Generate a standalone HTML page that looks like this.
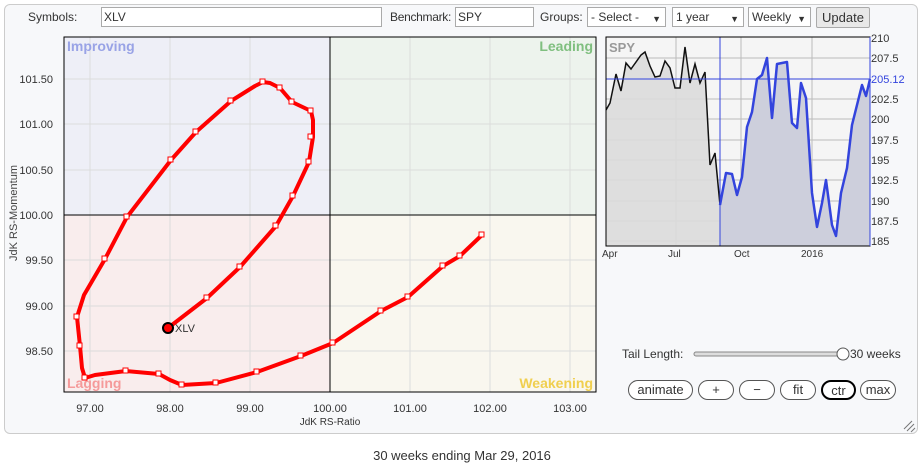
<!DOCTYPE html>
<html><head><meta charset="utf-8"><style>
*{margin:0;padding:0;box-sizing:border-box}
body{width:924px;height:466px;background:#fff;font-family:"Liberation Sans",Arial,sans-serif;position:relative;overflow:hidden;font-size:13px;color:#333}
.panel{position:absolute;left:4px;top:4px;width:914px;height:430px;background:#f7f8fa;border:1px solid #ccc;border-radius:6px}
.ab{position:absolute;font-size:12px}
.inp{position:absolute;height:20px;border:1px solid #aaa;background:#fff;font-size:12px;padding:2px 2px;line-height:15px}
.sel{position:absolute;height:20px;border:1px solid #aaa;background:#fff;font-size:12px;padding:2px 3px;line-height:15px}
.sel:after{content:"▼";position:absolute;right:4px;top:4px;font-size:9px}
.btn{position:absolute;height:20px;border:1px solid #555;border-radius:10px;background:#fff;font-size:13px;text-align:center;line-height:18px}
</style></head><body>
<div class="panel"></div>
<div class="ab" style="left:28px;top:10px">Symbols:</div>
<div class="inp" style="left:101px;top:7px;width:281px">XLV</div>
<div class="ab" style="left:390px;top:10px;letter-spacing:-0.3px">Benchmark:</div>
<div class="inp" style="left:455px;top:7px;width:79px">SPY</div>
<div class="ab" style="left:540px;top:10px">Groups:</div>
<div class="sel" style="left:587px;top:7px;width:79px">- Select -</div>
<div class="sel" style="left:672px;top:7px;width:72px">1 year</div>
<div class="sel" style="left:748px;top:7px;width:63px">Weekly</div>
<div class="ab" style="left:816px;top:7px;width:54px;height:21px;border:1px solid #aaa;border-radius:2px;background:#e8e8e8;text-align:center;line-height:19px;font-size:13px">Update</div>

<svg class="ab" style="left:0;top:0" width="924" height="466" font-family="Liberation Sans, Arial, sans-serif">
<rect x="64" y="37" width="266" height="178" fill="#eeeff7"/>
<rect x="330" y="37" width="266" height="178" fill="#edf3ed"/>
<rect x="64" y="215" width="266" height="177" fill="#f9eded"/>
<rect x="330" y="215" width="266" height="177" fill="#f9f7ef"/>
<g stroke="#dcdcdc" stroke-width="1">
<line x1="90" y1="37" x2="90" y2="392"/><line x1="170" y1="37" x2="170" y2="392"/><line x1="250" y1="37" x2="250" y2="392"/>
<line x1="410" y1="37" x2="410" y2="392"/><line x1="490" y1="37" x2="490" y2="392"/><line x1="570" y1="37" x2="570" y2="392"/>
<line x1="64" y1="79" x2="596" y2="79"/><line x1="64" y1="124" x2="596" y2="124"/><line x1="64" y1="170" x2="596" y2="170"/>
<line x1="64" y1="260" x2="596" y2="260"/><line x1="64" y1="306" x2="596" y2="306"/><line x1="64" y1="351" x2="596" y2="351"/>
</g>
<line x1="330" y1="37" x2="330" y2="392" stroke="#000"/>
<line x1="64" y1="215" x2="596" y2="215" stroke="#000"/>
<rect x="64" y="37" width="532" height="355" fill="none" stroke="#000"/>
<g font-weight="bold" font-size="14">
<text x="67" y="51" fill="#99a3e6">Improving</text>
<text x="593" y="51" fill="#7fbf7f" text-anchor="end">Leading</text>
<text x="67" y="388" fill="#f59a9a">Lagging</text>
<text x="593" y="388" fill="#f0cf4f" text-anchor="end">Weakening</text>
</g>
<g font-size="11" fill="#333" text-anchor="end">
<text x="53" y="83">101.50</text><text x="53" y="128">101.00</text><text x="53" y="174">100.50</text><text x="53" y="219">100.00</text>
<text x="53" y="264">99.50</text><text x="53" y="310">99.00</text><text x="53" y="355">98.50</text>
</g>
<g font-size="11" fill="#333" text-anchor="middle">
<text x="90" y="412">97.00</text><text x="170" y="412">98.00</text><text x="250" y="412">99.00</text><text x="330" y="412">100.00</text>
<text x="410" y="412">101.00</text><text x="490" y="412">102.00</text><text x="570" y="412">103.00</text>
<text x="330" y="425" font-size="10">JdK RS-Ratio</text>
<text transform="translate(17 213) rotate(-90)" font-size="11" fill="#444">JdK RS-Momentum</text>
</g>
<polyline fill="none" stroke="#f00" stroke-width="4" stroke-linejoin="round" stroke-linecap="round" points="482,235 460,256 443,266 408,297 381,311 333,343 301,356 257,372 216,383 182,385 170,380 159,374 126,371 95,375 85,378 82,368 80,346 77,317 84,295 105,259 127,217 171,160 196,132 231,101 255,86 263,82 270,83 280,88 292,102 311,111 313,120 313,137 309,162 293,196 276,226 240,267 207,298 168,328"/>
<g fill="#fff" stroke="#f00" stroke-width="1">
<rect x="479" y="232" width="5" height="5"/><rect x="457" y="253" width="5" height="5"/><rect x="440" y="263" width="5" height="5"/><rect x="405" y="294" width="5" height="5"/><rect x="378" y="308" width="5" height="5"/><rect x="330" y="340" width="5" height="5"/><rect x="298" y="353" width="5" height="5"/><rect x="254" y="369" width="5" height="5"/><rect x="213" y="380" width="5" height="5"/><rect x="179" y="382" width="5" height="5"/><rect x="156" y="371" width="5" height="5"/><rect x="123" y="368" width="5" height="5"/><rect x="82" y="375" width="5" height="5"/><rect x="77" y="343" width="5" height="5"/><rect x="74" y="314" width="5" height="5"/><rect x="102" y="256" width="5" height="5"/><rect x="124" y="214" width="5" height="5"/><rect x="168" y="157" width="5" height="5"/><rect x="193" y="129" width="5" height="5"/><rect x="228" y="98" width="5" height="5"/><rect x="260" y="79" width="5" height="5"/><rect x="277" y="85" width="5" height="5"/><rect x="289" y="99" width="5" height="5"/><rect x="308" y="108" width="5" height="5"/><rect x="308" y="134" width="5" height="5"/><rect x="306" y="159" width="5" height="5"/><rect x="290" y="193" width="5" height="5"/><rect x="273" y="223" width="5" height="5"/><rect x="237" y="264" width="5" height="5"/><rect x="204" y="295" width="5" height="5"/>
</g>
<circle cx="168" cy="328" r="5" fill="#f00" stroke="#000" stroke-width="2"/>
<text x="175" y="332" font-size="11" fill="#333">XLV</text>

<!-- SPY chart -->
<rect x="606" y="37" width="264" height="209" fill="#f5f5f5"/>
<g stroke="#bbb" stroke-width="1">
<line x1="676" y1="37" x2="676" y2="246"/><line x1="741" y1="37" x2="741" y2="246"/><line x1="812" y1="37" x2="812" y2="246"/>
<line x1="606" y1="58" x2="870" y2="58"/><line x1="606" y1="99" x2="870" y2="99"/><line x1="606" y1="119" x2="870" y2="119"/><line x1="606" y1="140" x2="870" y2="140"/><line x1="606" y1="160" x2="870" y2="160"/><line x1="606" y1="180" x2="870" y2="180"/><line x1="606" y1="201" x2="870" y2="201"/><line x1="606" y1="221" x2="870" y2="221"/><line x1="606" y1="241" x2="870" y2="241"/>
</g>
<polygon fill="#dcdcdc" fill-opacity="0.9" points="606,246 606,110 610,103 616,74 621,91 626,63 631,69 641,55 645,52 650,66 655,77 660,76 665,61 670,68 675,88 680,88 685,47 690,83 695,64 700,83 705,72 710,165 715,153 720,205 720,246"/>
<polygon fill="#cdcfdc" points="720,246 720,205 726,173 732,174 737,195 742,177 747,127 752,112 757,79 762,75 767,58 772,118 777,64 787,62 792,123 797,128 801,83 806,98 812,193 817,227 822,203 826,180 832,225 836,236 841,193 847,168 852,125 857,105 862,85 866,96 870,79 870,246"/>
<text x="609" y="52" font-size="13" font-weight="bold" fill="#999">SPY</text>
<polyline fill="none" stroke="#111" stroke-width="1.5" points="606,110 610,103 616,74 621,91 626,63 631,69 641,55 645,52 650,66 655,77 660,76 665,61 670,68 675,88 680,88 685,47 690,83 695,64 700,83 705,72 710,165 715,153 720,205"/>
<polyline fill="none" stroke="#3344dd" stroke-width="2.5" stroke-linejoin="round" points="720,205 726,173 732,174 737,195 742,177 747,127 752,112 757,79 762,75 767,58 772,118 777,64 787,62 792,123 797,128 801,83 806,98 812,193 817,227 822,203 826,180 832,225 836,236 841,193 847,168 852,125 857,105 862,85 866,96 870,79"/>
<line x1="720" y1="37" x2="720" y2="246" stroke="#3344dd"/>
<line x1="606" y1="79" x2="870" y2="79" stroke="#3344dd"/>
<rect x="606" y="37" width="264" height="209" fill="none" stroke="#000"/>
<line x1="870" y1="37" x2="870" y2="246" stroke="#3344dd"/>
<g font-size="11" fill="#333">
<text x="871" y="42">210</text><text x="871" y="62">207.5</text><text x="871" y="83" fill="#3344dd">205.12</text><text x="871" y="103">202.5</text><text x="871" y="123">200</text><text x="871" y="144">197.5</text><text x="871" y="164">195</text><text x="871" y="184">192.5</text><text x="871" y="205">190</text><text x="871" y="225">187.5</text><text x="871" y="245">185</text>
<text x="602" y="257" font-size="10">Apr</text><text x="668" y="257" font-size="10">Jul</text><text x="734" y="257" font-size="10">Oct</text><text x="801" y="257" font-size="10">2016</text>
</g>
<text x="622" y="358" font-size="12" fill="#333">Tail Length:</text>
<rect x="694" y="352" width="150" height="4" rx="2" fill="#ddd" stroke="#888"/>
<circle cx="843" cy="354" r="6" fill="#fff" stroke="#555"/>
<text x="850" y="358" font-size="12" fill="#333">30 weeks</text>
<path d="M912 421L904 429M914 424L907 431M915 428L911 432" stroke="#777" stroke-width="1"/>
<text x="462" y="460" font-size="13" fill="#333" text-anchor="middle">30 weeks ending Mar 29, 2016</text>
</svg>
<div class="btn" style="left:628px;top:380px;width:65px">animate</div>
<div class="btn" style="left:698px;top:380px;width:36px">+</div>
<div class="btn" style="left:739px;top:380px;width:36px">−</div>
<div class="btn" style="left:780px;top:380px;width:36px">fit</div>
<div class="btn" style="left:821px;top:380px;width:35px;border:2px solid #000">ctr</div>
<div class="btn" style="left:860px;top:380px;width:36px">max</div>
</body></html>
